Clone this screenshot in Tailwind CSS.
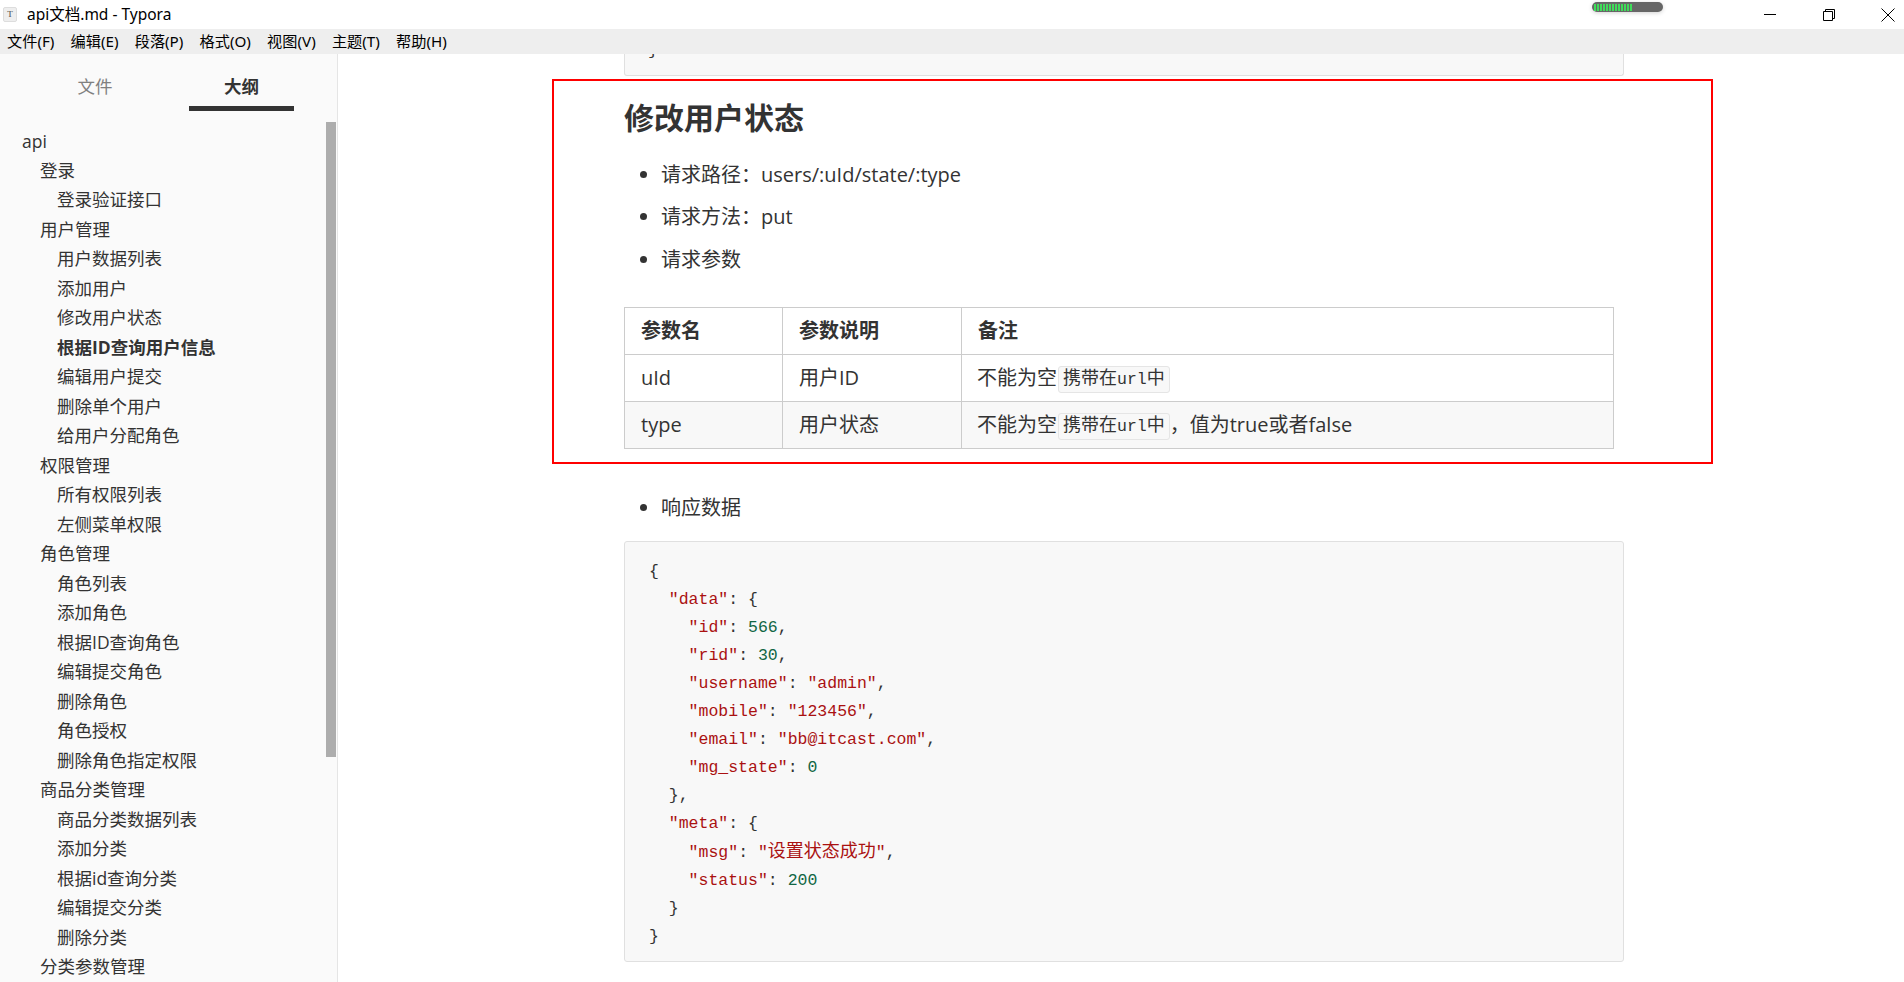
<!DOCTYPE html>
<html lang="zh-CN">
<head>
  <meta charset="UTF-8" />
  <meta name="viewport" content="width=device-width, initial-scale=1.0"/>
  <title>api文档.md - Typora</title>
  <script src="https://cdn.jsdelivr.net/npm/@tailwindcss/browser@4"></script>
</head>
<body class="bg-white text-[#333] h-[982px] overflow-hidden font-['Open_Sans','Noto_Sans_CJK_SC',sans-serif]">
  <!-- title bar -->
  <header class="relative flex items-center h-[29px] bg-white text-black">
    <div class="ml-[3px] w-[14px] h-[15px] flex items-center justify-center bg-[#eee] border border-[#ddd] rounded-[2px] text-[9px] leading-none text-[#444] font-['Liberation_Serif',serif]">T</div>
    <span class="ml-[10px] text-[15.5px] leading-none font-['Noto_Sans','Noto_Sans_CJK_SC',sans-serif]">api文档.md - Typora</span>
    <!-- tray widget -->
    <div class="absolute left-[1592px] top-[2px] w-[71px] h-[10px] rounded-full bg-[#666] shadow-[0_1px_4px_rgba(0,0,0,0.18)] flex items-center gap-[1px] pl-[2px]">
      <i class="w-[2px] h-[7px] bg-[#3fdc5a]"></i><i class="w-[2px] h-[7px] bg-[#3fdc5a]"></i><i class="w-[2px] h-[7px] bg-[#3fdc5a]"></i><i class="w-[2px] h-[7px] bg-[#3fdc5a]"></i><i class="w-[2px] h-[7px] bg-[#3fdc5a]"></i><i class="w-[2px] h-[7px] bg-[#3fdc5a]"></i><i class="w-[2px] h-[7px] bg-[#3fdc5a]"></i><i class="w-[2px] h-[7px] bg-[#3fdc5a]"></i><i class="w-[2px] h-[7px] bg-[#3fdc5a]"></i><i class="w-[2px] h-[7px] bg-[#3fdc5a]"></i><i class="w-[2px] h-[7px] bg-[#3fdc5a]"></i><i class="w-[2px] h-[7px] bg-[#3fdc5a]"></i><i class="w-[2px] h-[7px] bg-[#3fdc5a]"></i>
    </div>
    <div class="ml-auto flex items-center gap-[45px] pr-[9px] h-full">
      <svg width="14" height="14" viewBox="0 0 14 14"><path d="M1 6.5H13" stroke="#000" fill="none"/></svg>
      <svg width="14" height="14" viewBox="0 0 14 14"><path d="M1.5 3.5h9v9h-9zM3.5 3.5v-2h9v9h-2" stroke="#000" fill="none"/></svg>
      <svg width="14" height="14" viewBox="0 0 14 14"><path d="M.5.5l13 13M13.5.5l-13 13" stroke="#000" fill="none"/></svg>
    </div>
  </header>

  <!-- menu bar -->
  <nav class="flex items-center h-[25px] bg-[#eeeeee] text-[15.2px] leading-none text-black pl-[7px] gap-[16.2px] font-['Noto_Sans','Noto_Sans_CJK_SC',sans-serif]">
    <span>文件(F)</span><span>编辑(E)</span><span>段落(P)</span><span>格式(O)</span><span>视图(V)</span><span>主题(T)</span><span>帮助(H)</span>
  </nav>

  <div class="flex h-[928px]">
    <!-- sidebar -->
    <aside class="relative w-[338px] shrink-0 h-full bg-[#fafafa] border-r border-[#e5e5e5] overflow-hidden">
      <div class="flex h-[57px] pl-[69px]">
        <div class="w-[52px] pt-[16px] text-center text-[17.5px] leading-[32px] text-[#808080]">文件</div>
        <div class="ml-[68px] w-[105px] h-[57px] border-b-[5px] border-[#333] pt-[16px] text-center text-[17.5px] leading-[32px] font-bold">大纲</div>
      </div>
      <div class="absolute left-[326px] top-[68px] w-[10px] h-[635px] bg-[#adadad]"></div>
      <ul class="mt-[15.5px] text-[17.5px] leading-[29.48px]">
        <li class="pl-[22px]">api</li>
        <li class="pl-[40px]">登录</li>
        <li class="pl-[57px]">登录验证接口</li>
        <li class="pl-[40px]">用户管理</li>
        <li class="pl-[57px]">用户数据列表</li>
        <li class="pl-[57px]">添加用户</li>
        <li class="pl-[57px]">修改用户状态</li>
        <li class="pl-[57px] font-bold">根据ID查询用户信息</li>
        <li class="pl-[57px]">编辑用户提交</li>
        <li class="pl-[57px]">删除单个用户</li>
        <li class="pl-[57px]">给用户分配角色</li>
        <li class="pl-[40px]">权限管理</li>
        <li class="pl-[57px]">所有权限列表</li>
        <li class="pl-[57px]">左侧菜单权限</li>
        <li class="pl-[40px]">角色管理</li>
        <li class="pl-[57px]">角色列表</li>
        <li class="pl-[57px]">添加角色</li>
        <li class="pl-[57px]">根据ID查询角色</li>
        <li class="pl-[57px]">编辑提交角色</li>
        <li class="pl-[57px]">删除角色</li>
        <li class="pl-[57px]">角色授权</li>
        <li class="pl-[57px]">删除角色指定权限</li>
        <li class="pl-[40px]">商品分类管理</li>
        <li class="pl-[57px]">商品分类数据列表</li>
        <li class="pl-[57px]">添加分类</li>
        <li class="pl-[57px]">根据id查询分类</li>
        <li class="pl-[57px]">编辑提交分类</li>
        <li class="pl-[57px]">删除分类</li>
        <li class="pl-[40px]">分类参数管理</li>
      </ul>
    </aside>

    <!-- document -->
    <main class="relative flex-1 h-full overflow-hidden pl-[286px] text-[20px]">
      <div class="relative w-[1000px] h-[22px] bg-[#f8f8f8] border border-t-0 border-[#e0e0e0] rounded-b-[3px] overflow-hidden">
        <span class="absolute left-[23px] -top-[17px] text-[16.5px] leading-[28px] font-['Liberation_Mono',monospace]">}</span>
      </div>

      <h2 class="mt-[21px] text-[30px] leading-[42px] font-bold">修改用户状态</h2>

      <ul class="mt-[15px] list-disc pl-[37px]">
        <li class="h-[42px] leading-[42px]">请求路径：users/:uId/state/:type</li>
        <li class="h-[42px] leading-[42px]">请求方法：put</li>
        <li class="h-[42px] leading-[43px]">请求参数</li>
      </ul>

      <table class="mt-[27px] w-[990px] table-fixed border-collapse text-[20px]">
        <colgroup><col class="w-[158px]"/><col class="w-[179px]"/><col/></colgroup>
        <tr class="h-[47px] font-bold">
          <th class="border border-[#ccc] px-[16px] text-left">参数名</th>
          <th class="border border-[#ccc] px-[16px] text-left">参数说明</th>
          <th class="border border-[#ccc] px-[16px] text-left">备注</th>
        </tr>
        <tr class="h-[47px]">
          <td class="border border-[#ccc] px-[16px]">uId</td>
          <td class="border border-[#ccc] px-[16px]">用户ID</td>
          <td class="border border-[#ccc] px-[15px]">不能为空<code class="ml-[1px] inline-block h-[27px] leading-[25px] align-middle px-[4px] bg-[#f8f8f8] border border-[#e5e5e5] rounded-[3px] text-[18px] font-['Liberation_Mono','Noto_Sans_CJK_SC',monospace]">携带在<span class="text-[16.5px]">url</span>中</code></td>
        </tr>
        <tr class="h-[47px] bg-[#f8f8f8]">
          <td class="border border-[#ccc] px-[16px]">type</td>
          <td class="border border-[#ccc] px-[16px]">用户状态</td>
          <td class="border border-[#ccc] px-[15px]">不能为空<code class="ml-[1px] inline-block h-[27px] leading-[25px] align-middle px-[4px] bg-[#f8f8f8] border border-[#e5e5e5] rounded-[3px] text-[18px] font-['Liberation_Mono','Noto_Sans_CJK_SC',monospace]">携带在<span class="text-[16.5px]">url</span>中</code>，值为true或者false</td>
        </tr>
      </table>

      <ul class="mt-[37px] list-disc pl-[37px]">
        <li class="h-[42px] leading-[44px]">响应数据</li>
      </ul>

      <pre class="mt-[13px] w-[1000px] h-[421px] bg-[#f8f8f8] border border-[#e0e0e0] rounded-[3px] pt-[16px] pl-[24px] text-[16.5px] leading-[28px] font-['Liberation_Mono','Noto_Sans_CJK_SC',monospace]">{
  <span class="text-[#a11]">"data"</span>: {
    <span class="text-[#a11]">"id"</span>: <span class="text-[#164]">566</span>,
    <span class="text-[#a11]">"rid"</span>: <span class="text-[#164]">30</span>,
    <span class="text-[#a11]">"username"</span>: <span class="text-[#a11]">"admin"</span>,
    <span class="text-[#a11]">"mobile"</span>: <span class="text-[#a11]">"123456"</span>,
    <span class="text-[#a11]">"email"</span>: <span class="text-[#a11]">"bb@itcast.com"</span>,
    <span class="text-[#a11]">"mg_state"</span>: <span class="text-[#164]">0</span>
  },
  <span class="text-[#a11]">"meta"</span>: {
    <span class="text-[#a11]">"msg"</span>: <span class="text-[#a11]">"<span class="text-[18px]">设置状态成功</span>"</span>,
    <span class="text-[#a11]">"status"</span>: <span class="text-[#164]">200</span>
  }
}</pre>

      <!-- annotation drawn over the page -->
      <div class="absolute left-[214px] top-[25px] w-[1161px] h-[385px] border-2 border-[#ff0000] pointer-events-none"></div>
    </main>
  </div>
</body>
</html>
